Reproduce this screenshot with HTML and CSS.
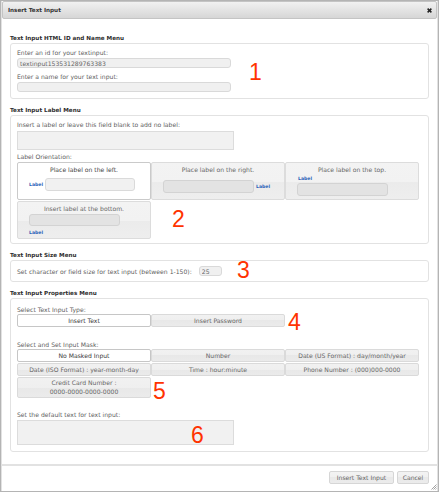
FILE: index.html
```html
<!DOCTYPE html>
<html>
<head>
<meta charset="utf-8">
<title>Insert Text Input</title>
<link rel="stylesheet" href="styles.css">
</head>
<body>
<div class="dialog">
  <div class="titlebar">
    <span class="title">Insert Text Input</span>
    <span class="close"><svg width="5" height="5" viewBox="0 0 5 5"><path d="M0.6 0.6L4.4 4.4M4.4 0.6L0.6 4.4" stroke="#222" stroke-width="1.5"/></svg></span>
  </div>
  <div class="content">
    <div class="heading">Text Input HTML ID and Name Menu</div>
    <div class="box box-id">
      <div class="label">Enter an id for your textinput:</div>
      <input class="field" type="text" value="textinput153531289763383">
      <div class="label label-gap">Enter a name for your text input:</div>
      <input class="field" type="text" value="">
      <span class="anno anno-1">1</span>
    </div>

    <div class="heading">Text Input Label Menu</div>
    <div class="box box-label">
      <div class="label">Insert a label or leave this field blank to add no label:</div>
      <textarea class="area area-label"></textarea>
      <div class="label label-orient">Label Orientation:</div>
      <div class="orient-grid">
        <div class="card active">
          <div class="card-title">Place label on the left.</div>
          <div class="card-row row-left"><span class="mini-label">Label</span><span class="mini-field"></span></div>
        </div>
        <div class="card">
          <div class="card-title">Place label on the right.</div>
          <div class="card-row row-right"><span class="mini-field"></span><span class="mini-label">Label</span></div>
        </div>
        <div class="card">
          <div class="card-title">Place label on the top.</div>
          <div class="mini-label mini-top">Label</div>
          <div class="mini-field mini-block"></div>
        </div>
        <div class="card">
          <div class="card-title">Insert label at the bottom.</div>
          <div class="mini-field mini-block mini-bottom"></div>
          <div class="mini-label mini-under">Label</div>
        </div>
      </div>
      <span class="anno anno-2">2</span>
    </div>

    <div class="heading">Text Input Size Menu</div>
    <div class="box box-size">
      <span class="size-text">Set character or field size for text input (between 1-150):</span>
      <input class="field size-field" type="text" value="25">
      <span class="anno anno-3">3</span>
    </div>

    <div class="heading">Text Input Properties Menu</div>
    <div class="box box-props">
      <div class="label">Select Text Input Type:</div>
      <div class="btn-grid">
        <button class="opt active">Insert Text</button>
        <button class="opt">Insert Password</button>
      </div>
      <div class="label label-mask">Select and Set Input Mask:</div>
      <div class="btn-grid mask-grid">
        <button class="opt active">No Masked Input</button>
        <button class="opt">Number</button>
        <button class="opt">Date (US Format) : day/month/year</button>
        <button class="opt">Date (ISO Format) : year-month-day</button>
        <button class="opt">Time : hour:minute</button>
        <button class="opt">Phone Number : (000)000-0000</button>
        <button class="opt tall">Credit Card Number :<br>0000-0000-0000-0000</button>
      </div>
      <div class="label label-default">Set the default text for text input:</div>
      <textarea class="area area-default"></textarea>
      <span class="anno anno-4">4</span>
      <span class="anno anno-5">5</span>
      <span class="anno anno-6">6</span>
    </div>
  </div>
  <div class="footer">
    <button class="fbtn fbtn-insert">Insert Text Input</button>
    <button class="fbtn fbtn-cancel">Cancel</button>
  </div>
  <span class="grip"><svg width="6" height="6" viewBox="0 0 6 6"><path d="M5.5 0.5L0.5 5.5M5.5 2.5L2.5 5.5M5.5 4.5L4.5 5.5" stroke="#8a8a8a" stroke-width="0.8"/></svg></span>
</div>
</body>
</html>
```

FILE: styles.css
```css
* { box-sizing: border-box; }

body {
  margin: 0;
  background: #fff;
  font-family: "DejaVu Sans", Verdana, sans-serif;
  font-size: 6.1px;
  color: #606060;
}

.dialog {
  position: relative;
  width: 439px;
  height: 492px;
  border: 1px solid #b4b4b4;
  padding: 0 1px 1px 1px;
  background: #fff;
  display: flex;
  flex-direction: column;
  box-shadow: inset 1px 0 0 #e2e2e2, inset -1px 0 0 #e2e2e2;
}

.titlebar {
  flex: none;
  height: 18px;
  display: flex;
  align-items: center;
  justify-content: space-between;
  padding: 0 4px 0 5px;
  background: linear-gradient(#f1f1f1, #d6d6d6);
  border: 1px solid #c4c4c4;
  border-radius: 2px;
}

.title {
  font-weight: bold;
  font-size: 5.65px;
  color: #333;
}

.close { display: flex; }

.content {
  flex: 1;
  padding: 14px 8px 0;
}

.heading {
  margin-top: 6px;
  font-size: 5.65px;
  font-weight: bold;
  line-height: 10px;
  color: #2e2e2e;
}

.heading:first-child { margin-top: 0; }

.box {
  position: relative;
  border: 1px solid #e2e2e2;
  border-radius: 3px;
  padding: 4px 6px;
}

.label {
  line-height: 9px;
  white-space: nowrap;
}

.field {
  display: block;
  width: 214px;
  height: 10px;
  margin: 1px 0 0;
  padding: 0 2px;
  border: 1px solid #d9d9d9;
  border-radius: 3px;
  background: #f0f0f0;
  font: inherit;
  color: #666;
  outline: none;
}

.box-id { padding-bottom: 6px; }
.label-gap { margin-top: 4px; }

.area {
  display: block;
  resize: none;
  margin: 0;
  padding: 2px;
  border: 1px solid #dcdcdc;
  background: #f1f1f1;
  font: inherit;
  outline: none;
  overflow: hidden;
}

.area-label { width: 217px; height: 19px; margin-top: 2px; }
.label-orient { margin-top: 2px; }

.orient-grid {
  display: grid;
  grid-template-columns: repeat(3, 134px);
  grid-auto-rows: 38px;
  row-gap: 1px;
  margin-top: 1px;
}

.card {
  border: 1px solid #dcdcdc;
  border-radius: 2px;
  background: linear-gradient(#f3f3f3 0%, #f2f2f2 52%, #ebebeb 52%, #eeeeee 100%);
  padding: 2px 11px 0;
  color: #666;
}

.card.active {
  background: #fff;
  border-color: #cacaca;
  color: #444;
}

.card-title {
  text-align: center;
  line-height: 10px;
  white-space: nowrap;
}

.card-row {
  display: flex;
  align-items: center;
  gap: 2px;
}

.row-left { margin-top: 3px; }
.row-right { margin-top: 5px; }

.mini-label {
  font-size: 4.6px;
  font-weight: bold;
  color: #2a62b8;
  line-height: 7px;
}

.mini-field {
  display: block;
  width: 91px;
  height: 13px;
  border: 1px solid #d3d3d3;
  border-radius: 3px;
  background: #e3e3e3;
}

.card.active .mini-field {
  width: 90px;
  background: #f1f1f1;
  border-color: #dadada;
}

.mini-top { margin-left: 1px; }
.mini-block { margin-top: 1px; }
.mini-bottom { margin-top: 0; height: 12px; }
.mini-under { margin-top: 3px; }

.box-size {
  display: flex;
  align-items: center;
  padding: 5px 6px;
}

.size-text { white-space: nowrap; }

.size-field {
  width: 23px;
  margin: 0 0 0 7px;
}

.box-props { padding: 6px 6px 6px; }

.btn-grid {
  display: grid;
  grid-template-columns: repeat(3, 134px);
  row-gap: 1px;
}

.opt {
  height: 13px;
  margin: 0;
  padding: 0;
  border: 1px solid #dadada;
  border-radius: 2px;
  background: linear-gradient(#f1f1f1 0%, #efefef 50%, #e8e8e8 50%, #ebebeb 100%);
  font: inherit;
  color: #666;
  text-align: center;
  white-space: nowrap;
  line-height: 9px;
}

.opt.active {
  background: #fff;
  border-color: #c6c6c6;
  color: #3a3a3a;
}

.opt.tall {
  height: 21px;
  line-height: 8.5px;
}

.label-mask { margin-top: 13px; }
.label-default { margin-top: 12px; }

.area-default { width: 217px; height: 25px; margin-top: 1px; }

.anno {
  position: absolute;
  font-family: "Liberation Sans", Arial, sans-serif;
  font-size: 23px;
  line-height: 23px;
  color: #ff3300;
}

.anno-1 { left: 238px; top: 17px; }
.anno-2 { left: 161px; top: 92px; }
.anno-3 { left: 226px; top: -2px; }
.anno-4 { left: 277px; top: 12px; }
.anno-5 { left: 142px; top: 81px; }
.anno-6 { left: 180px; top: 125px; }

.footer {
  flex: none;
  height: 26px;
  border-top: 2px solid #e2e2e2;
  display: flex;
  justify-content: flex-end;
  align-items: flex-start;
  gap: 3px;
  padding: 5px 8px 0 0;
}

.fbtn {
  height: 13px;
  margin: 0;
  padding: 0;
  border: 1px solid #d6d6d6;
  border-radius: 2px;
  background: linear-gradient(#f3f3f3 0%, #f0f0f0 50%, #e9e9e9 50%, #ececec 100%);
  font: inherit;
  color: #666;
  white-space: nowrap;
}

.fbtn-insert { width: 65px; }
.fbtn-cancel { width: 32px; }

.grip {
  position: absolute;
  right: 1px;
  bottom: 1px;
  display: flex;
}
```
